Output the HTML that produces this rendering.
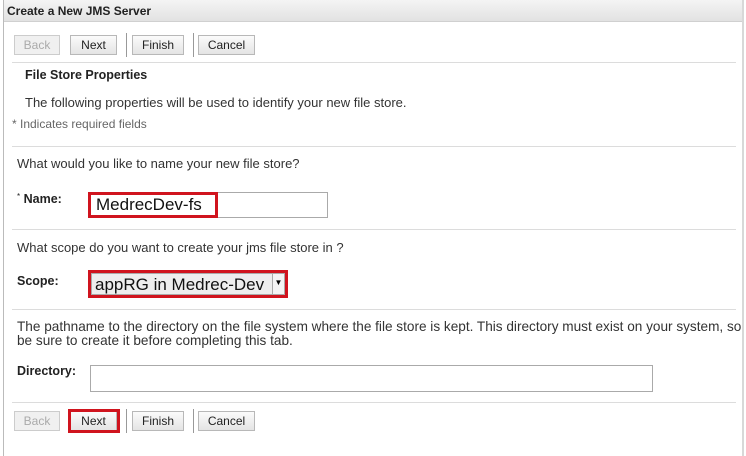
<!DOCTYPE html>
<html><head><style>
*{margin:0;padding:0;box-sizing:border-box}
body{width:746px;height:456px;background:#fff;font-family:"Liberation Sans",sans-serif;font-size:13px;color:#333;position:relative;overflow:hidden}
.a{position:absolute;white-space:nowrap}
.hdr{left:4px;top:0;width:738px;height:22px;background:linear-gradient(#f4f4f4,#e2e2e2);border-bottom:1px solid #d0d0d0}
.lb{left:3px;top:0;width:1px;height:456px;background:#bbb}
.rb{left:742px;top:0;width:2px;height:456px;background:#d8d8d8}
.btn{position:absolute;height:20px;border:1px solid #b8b8b8;background:linear-gradient(#fbfbfb,#e4e4e4);font-size:12px;text-align:center;line-height:18px;color:#222}
.dis{color:#aaa;background:#f0f0f0;border-color:#ccc}
.sep{position:absolute;width:1px;background:#999}
.hr{position:absolute;left:12px;width:724px;height:1px;background:#dcdcdc}
.red{position:absolute;border:3px solid #d0141e}
</style></head><body>
<div class="a lb"></div><div class="a rb"></div>
<div class="a hdr"></div>
<div class="a" style="left:7px;top:4px;font-weight:bold;font-size:12px;color:#222">Create a New JMS Server</div>

<div class="btn dis" style="left:14px;top:35px;width:46px">Back</div>
<div class="btn" style="left:70px;top:35px;width:47px">Next</div>
<div class="sep" style="left:126px;top:33px;height:24px"></div>
<div class="btn" style="left:132px;top:35px;width:52px">Finish</div>
<div class="sep" style="left:193px;top:33px;height:24px"></div>
<div class="btn" style="left:198px;top:35px;width:57px">Cancel</div>
<div class="hr" style="top:62px"></div>
<div class="a" style="left:25px;top:68px;font-weight:bold;font-size:12.5px;color:#222">File Store Properties</div>
<div class="a" style="left:25px;top:95px">The following properties will be used to identify your new file store.</div>
<div class="a" style="left:12px;top:117px;color:#666;font-size:12px">* Indicates required fields</div>
<div class="hr" style="top:146px"></div>
<div class="a" style="left:17px;top:156px">What would you like to name your new file store?</div>
<div class="a" style="left:17px;top:192px;font-weight:bold;font-size:12.5px;color:#222"><span style="font-weight:normal;font-size:8px;vertical-align:top">*</span> Name:</div>
<div class="a" style="left:88px;top:192px;width:240px;height:26px;border:1px solid #aaa"></div>
<div class="red" style="left:88px;top:192px;width:130px;height:26px"></div>
<div class="a" style="left:96px;top:195px;font-size:17px;color:#111">MedrecDev-fs</div>
<div class="hr" style="top:229px"></div>
<div class="a" style="left:17px;top:240px">What scope do you want to create your jms file store in ?</div>
<div class="a" style="left:17px;top:274px;font-weight:bold;font-size:12.5px;color:#222">Scope:</div>
<div class="a" style="left:91px;top:273px;width:194px;height:22px;background:#eee;border:1px solid #aaa"></div>
<div class="a" style="left:272px;top:274px;width:12px;height:20px;background:#f4f4f4;border-left:1px solid #aaa;font-size:8px;text-align:center;line-height:18px;color:#000">▼</div>
<div class="red" style="left:88px;top:270px;width:200px;height:28px"></div>
<div class="a" style="left:95px;top:275px;font-size:17px;color:#111">appRG in Medrec-Dev</div>
<div class="hr" style="top:309px"></div>
<div class="a" style="left:17px;top:319px;font-size:13.6px">The pathname to the directory on the file system where the file store is kept. This directory must exist on your system, so</div>
<div class="a" style="left:17px;top:333px;font-size:13.6px">be sure to create it before completing this tab.</div>
<div class="a" style="left:17px;top:364px;font-weight:bold;font-size:12.5px;color:#222">Directory:</div>
<div class="a" style="left:90px;top:365px;width:563px;height:27px;border:1px solid #aaa"></div>
<div class="hr" style="top:402px"></div>
<div class="btn dis" style="left:14px;top:411px;width:46px">Back</div>
<div class="btn" style="left:70px;top:411px;width:47px">Next</div>
<div class="red" style="left:68px;top:409px;width:52px;height:24px"></div>
<div class="sep" style="left:126px;top:409px;height:24px"></div>
<div class="btn" style="left:132px;top:411px;width:52px">Finish</div>
<div class="sep" style="left:193px;top:409px;height:24px"></div>
<div class="btn" style="left:198px;top:411px;width:57px">Cancel</div>
</body></html>
